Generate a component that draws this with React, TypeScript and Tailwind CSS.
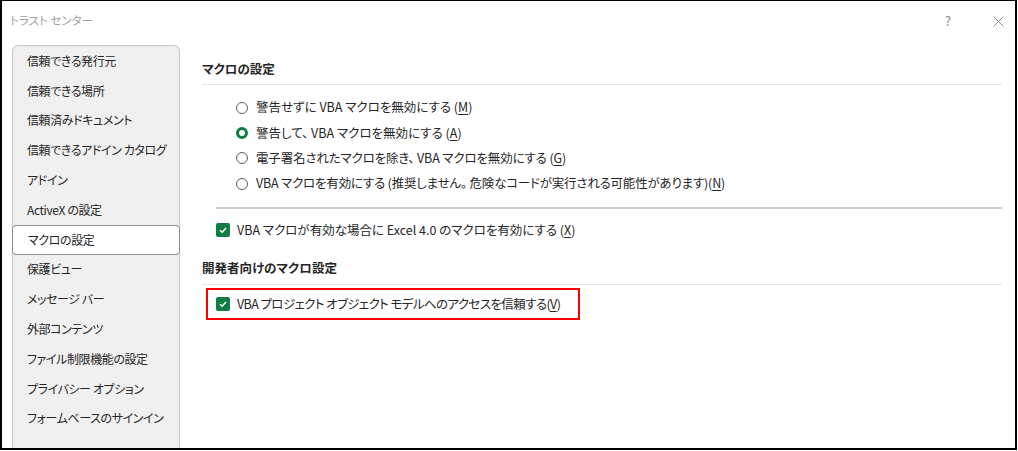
import React from "react";

const font =
  "[font-family:'Noto_Sans_CJK_JP','Noto_Sans',sans-serif] [font-feature-settings:'palt']";

const sideItems = [
  "信頼できる発行元",
  "信頼できる場所",
  "信頼済みドキュメント",
  "信頼できるアドイン カタログ",
  "アドイン",
  "ActiveX の設定",
  "マクロの設定",
  "保護ビュー",
  "メッセージ バー",
  "外部コンテンツ",
  "ファイル制限機能の設定",
  "プライバシー オプション",
  "フォームベースのサインイン",
];

function Radio({ checked }: { checked?: boolean }) {
  return checked ? (
    <span className="w-[12px] h-[12px] rounded-full border-[3px] border-[#107c41] bg-white shrink-0" />
  ) : (
    <span className="w-[12px] h-[12px] rounded-full border border-[#5f5f5f] bg-white shrink-0" />
  );
}

function Check() {
  return (
    <span className="w-[14px] h-[14px] rounded-[2px] bg-[#107c41] flex items-center justify-center shrink-0">
      <svg width="10" height="10" viewBox="0 0 10 10">
        <path d="M2 5.2 L4.1 7.2 L8 2.9" fill="none" stroke="white" strokeWidth="1.5" />
      </svg>
    </span>
  );
}

function Label({ text, k, tail, cls }: { text: string; k: string; tail?: string; cls?: string }) {
  return (
    <span className={`whitespace-nowrap ${cls ?? ""}`}>
      {text}
      (<span className="underline underline-offset-2">{k}</span>){tail}
    </span>
  );
}

export default function App() {
  return (
    <div className={`w-[1018px] h-[451px] bg-white ${font} text-[12.5px] text-[#262626]`}>
      <div className="w-[1017px] h-[450px] border-t border-l-2 border-r-2 border-b-2 border-black overflow-hidden flex flex-col bg-white">
        {/* title bar */}
        <div className="h-[44px] shrink-0 flex items-center pl-[8px] pr-[10px] pb-[4px]">
          <span className="text-[11.5px] text-[#a0a0a0] whitespace-nowrap">トラスト センター</span>
          <span className="ml-auto text-[#8a8a8a] text-[13px] mr-[42px]">?</span>
          <svg width="11" height="11" viewBox="0 0 11 11" className="mr-[1px]">
            <path d="M0.5 0.5 L10.5 10.5 M10.5 0.5 L0.5 10.5" stroke="#8a8a8a" strokeWidth="1" />
          </svg>
        </div>
        {/* body */}
        <div className="flex flex-1 min-h-0">
          <div className="ml-[10px] w-[168px] shrink-0 bg-[#f0f0f0] border border-b-0 border-[#c6c6c6] rounded-t-[6px] h-[420px] text-[12px] tracking-[-0.4px]">
            {sideItems.map((s, i) =>
              i === 6 ? (
                <div
                  key={s}
                  className="h-[29.8px] -mx-px bg-white border border-[#8f8f8f] rounded-[4px] flex items-center pl-[15px] whitespace-nowrap"
                >
                  {s}
                </div>
              ) : (
                <div key={s} className="h-[29.8px] flex items-center pl-[14px] whitespace-nowrap">
                  {s}
                </div>
              )
            )}
          </div>
          <div className="flex-1 ml-[22px] mr-[13px] pt-[15px]">
            <div className="font-bold leading-[18px] pb-[6px] border-b border-[#e3e3e3]">マクロの設定</div>
            <div className="mt-[10px] pl-[34px] flex flex-col">
              <div className="h-[25.3px] flex items-center gap-[8px]">
                <Radio />
                <Label text="警告せずに VBA マクロを無効にする " k="M" />
              </div>
              <div className="h-[25.3px] flex items-center gap-[8px]">
                <Radio checked />
                <Label text="警告して、 VBA マクロを無効にする " k="A" />
              </div>
              <div className="h-[25.3px] flex items-center gap-[8px]">
                <Radio />
                <Label text="電子署名されたマクロを除き、 VBA マクロを無効にする " k="G" cls="tracking-[-0.15px]" />
              </div>
              <div className="h-[25.3px] flex items-center gap-[8px]">
                <Radio />
                <Label
                  text="VBA マクロを有効にする (推奨しません。 危険なコードが実行される可能性があります)"
                  k="N"
                  cls="tracking-[-0.2px]"
                />
              </div>
            </div>
            <div className="ml-[14px] mt-[11px] h-[2px] bg-[#cfcfcf]" />
            <div className="ml-[14px] h-[42px] flex items-center gap-[7px]">
              <Check />
              <Label text="VBA マクロが有効な場合に Excel 4.0 のマクロを有効にする " k="X" />
            </div>
            <div className="font-bold leading-[18px] pt-[8px] pb-[7px] border-b border-[#e3e3e3]">
              開発者向けのマクロ設定
            </div>
            <div className="ml-[4px] mt-[3px] w-[374px] h-[32px] border-2 border-[#ff0000] flex items-center pl-[8px] gap-[7px]">
              <Check />
              <Label
                text="VBA プロジェクト オブジェクト モデルへのアクセスを信頼する"
                k="V"
                cls="tracking-[-0.6px]"
              />
            </div>
          </div>
        </div>
      </div>
    </div>
  );
}
